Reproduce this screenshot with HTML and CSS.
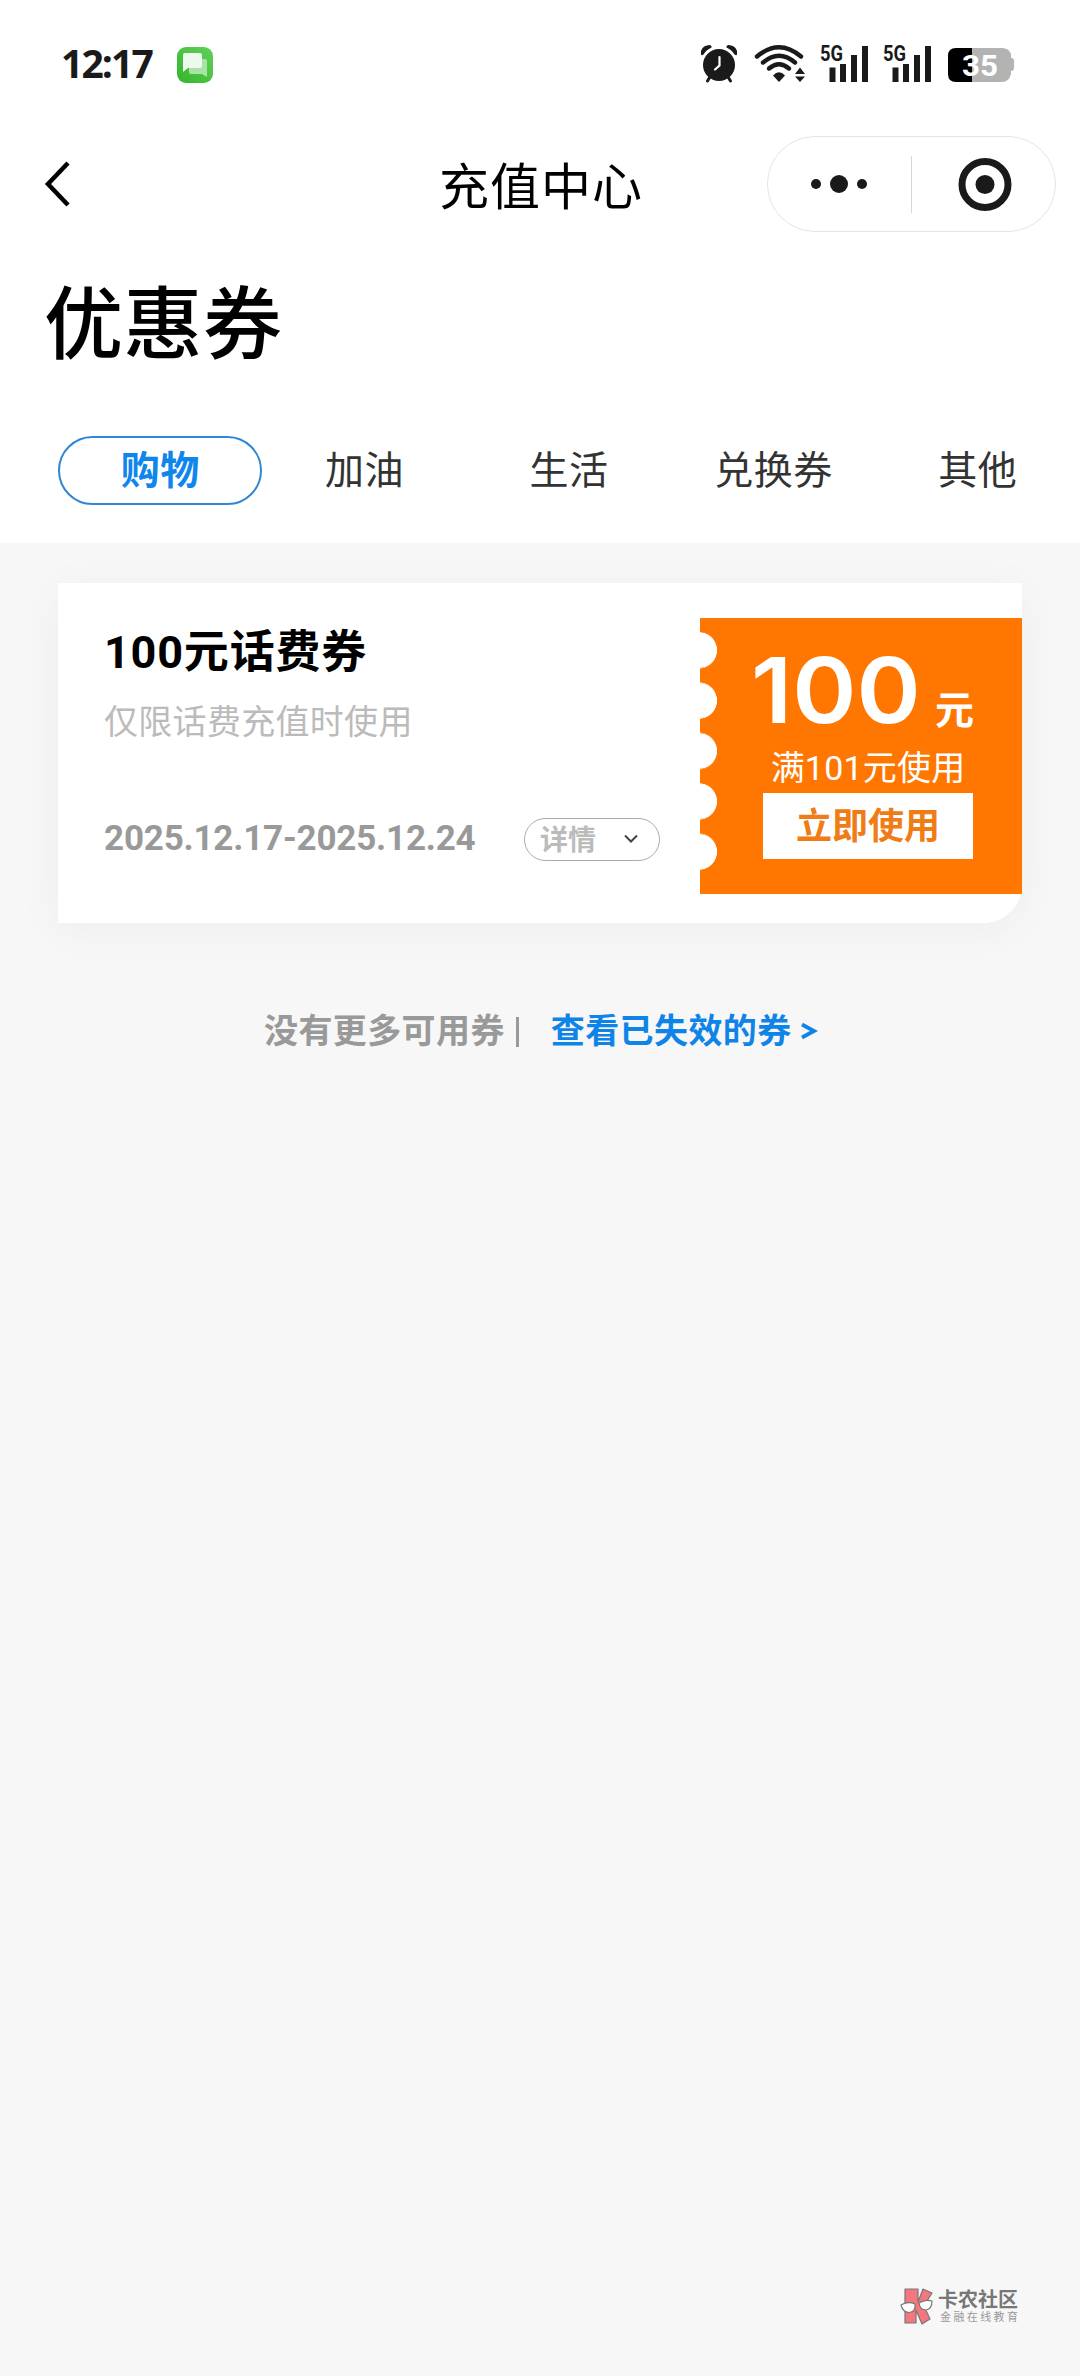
FILE: index.html
```html
<!DOCTYPE html>
<html lang="zh-CN">
<head>
<meta charset="utf-8">
<title>充值中心</title>
<link rel="stylesheet" href="styles.css">
</head>
<body>
<div class="page">
  <header class="top">
    <div class="status">
      <span class="clock">12:17</span>
      <svg class="msg" width="36" height="36" viewBox="0 0 36 36">
        <defs><linearGradient id="green" x1="1" y1="0" x2="0" y2="1"><stop offset="0" stop-color="#62d05a"/><stop offset="1" stop-color="#35b52c"/></linearGradient></defs>
        <rect width="36" height="36" rx="9" fill="url(#green)"/>
        <path d="M14 12h14q2 0 2 2v16l-5-3H14q-2 0-2-2V14z" fill="#a9e3a3"/>
        <path d="M8 6h15q2 0 2 2v11q0 2-2 2H11l-5 4V8q0-2 2-2z" fill="#edf9ec"/>
      </svg>
      <div class="status-icons">
        <svg width="38" height="40" viewBox="0 0 38 40">
          <g fill="none" stroke="#1a1a1a" stroke-linecap="round">
            <path d="M10.500 32L7.500 37M27.500 32L30.500 37" stroke-width="3"/>
          </g>
          <path d="M1 10.500Q0 2 9 1q3 0 2.500 2.500Q6 6 3.500 10.500 1.500 12 1 10.500zM37 10.500Q38 2 29 1q-3 0-2.500 2.500Q32 6 34.500 10.500q2 1.500 2.500 0z" fill="#1a1a1a"/>
          <circle cx="19" cy="21" r="16" fill="#1a1a1a"/>
          <path d="M19.500 13v8.500l-4.500 4" fill="none" stroke="#fff" stroke-width="2.200" stroke-linecap="round"/>
        </svg>
        <svg class="wifi" width="52" height="40" viewBox="0 0 52 40">
          <g fill="none" stroke="#1a1a1a" stroke-width="4.400" stroke-linecap="round">
            <path d="M3 12.500Q25 -6 47 12.500"/>
            <path d="M9 18.500Q25 5 41 18.500"/>
            <path d="M15 24.500Q25 16 35 24.500"/>
          </g>
          <path d="M25 38l-6-6.500q6-6.500 12 0z" fill="#1a1a1a"/>
          <path d="M46 23.500l5 6.500h-10zM46 38l5-5.500h-10z" fill="#1a1a1a"/>
        </svg>
        <svg class="signal" width="48" height="40" viewBox="0 0 48 40">
          <text x="0" y="17" class="net" textLength="23" lengthAdjust="spacingAndGlyphs">5G</text>
          <path d="M9.500 23.500h6V38h-6zM20 20h6v18h-6zM31 11h6v27h-6zM42 2h6v36h-6z" fill="#1a1a1a"/>
        </svg>
        <svg class="signal" width="48" height="40" viewBox="0 0 48 40">
          <text x="0" y="17" class="net" textLength="23" lengthAdjust="spacingAndGlyphs">5G</text>
          <path d="M9.500 23.500h6V38h-6zM20 20h6v18h-6zM31 11h6v27h-6zM42 2h6v36h-6z" fill="#1a1a1a"/>
        </svg>
        <svg class="battery" width="66" height="40" viewBox="0 0 66 40">
          <path d="M24 4h30q7 0 9 6v4q3 0 3 3v7q0 3-3 3v3q-2 8-9 8H24z" fill="#b3b3b3"/>
          <path d="M24 4H8Q0 4 0 12v18q0 8 8 8h16z" fill="#000"/>
          <text x="32" y="32" class="level" text-anchor="middle" textLength="36" lengthAdjust="spacingAndGlyphs">35</text>
        </svg>
      </div>
    </div>

    <nav class="nav">
      <svg class="back" width="30" height="50" viewBox="0 0 30 50">
        <path d="M24 4L4 25l20 21" fill="none" stroke="#000" stroke-width="4.500"/>
      </svg>
      <div class="nav-title">充值中心</div>
      <div class="capsule">
        <svg width="143" height="94" viewBox="0 0 143 94">
          <g fill="#1a1a1a"><circle cx="48" cy="47" r="5"/><circle cx="71" cy="47" r="9"/><circle cx="94" cy="47" r="5"/></g>
        </svg>
        <span class="split"></span>
        <svg width="143" height="94" viewBox="0 0 143 94">
          <circle cx="73" cy="47.500" r="23" fill="none" stroke="#1a1a1a" stroke-width="7"/><circle cx="73" cy="47.500" r="9.500" fill="#1a1a1a"/>
        </svg>
      </div>
    </nav>

    <h1 class="heading">优惠券</h1>

    <div class="tabs">
      <a class="tab active">购物</a>
      <a class="tab">加油</a>
      <a class="tab">生活</a>
      <a class="tab">兑换券</a>
      <a class="tab">其他</a>
    </div>
  </header>

  <main class="list">
    <article class="coupon">
      <div class="info">
        <h2 class="name">100元话费券</h2>
        <p class="limit">仅限话费充值时使用</p>
        <div class="meta">
          <span class="dates">2025.12.17-2025.12.24</span>
          <a class="detail"><span>详情</span>
            <svg width="16" height="12" viewBox="0 0 16 12"><path d="M2 2.500l6 6 6-6" fill="none" stroke="#444" stroke-width="2"/></svg>
          </a>
        </div>
      </div>
      <div class="ticket">
        <div class="amount"><span class="value">100</span><span class="unit">元</span></div>
        <div class="rule">满101元使用</div>
        <a class="use">立即使用</a>
      </div>
    </article>

    <p class="more"><span>没有更多可用券</span><i class="bar"></i><a class="expired">查看已失效的券</a><svg class="arrow" width="16" height="18" viewBox="0 0 16 18"><path d="M1 2.500L13 9 1 15.500" fill="none" stroke="#0f84e8" stroke-width="3.800"/></svg></p>
  </main>

  <footer class="mark">
    <svg width="36" height="38" viewBox="0 0 36 38">
      <g fill="#f4777d" stroke="#777" stroke-width="1.200" stroke-linejoin="round">
        <path d="M6 2h13v13l5-13 9 4-8 13 6 13-8 5-6-14v13H6z"/>
      </g>
      <g fill="#fff" stroke="#777" stroke-width="1.200">
        <path d="M2 18q7-4 14-1 1 8-6 8.500-6 0-8-7.500zM20 16q6-4 13-2 0 8-6 9-6 0-7-7z"/>
      </g>
    </svg>
    <div class="mark-text"><b>卡农社区</b><span>金融在线教育</span></div>
  </footer>
</div>
</body>
</html>
```
FILE: styles.css
```css
* { box-sizing: border-box; margin: 0; padding: 0; }
body {
  background: #f7f7f7;
  font-family: Roboto, "Noto Sans CJK SC", sans-serif;
  color: #000;
}
svg { display: block; flex: none; overflow: visible; }
.page { width: 1080px; height: 2376px; display: flex; flex-direction: column; overflow: hidden; }
.top { height: 543px; background: #fff; }

.status { display: flex; align-items: flex-start; height: 136px; padding: 44px 66px 0 61px; }
.clock {
  width: 116px;
  margin-top: -1px;
  font: 700 39px/40px "Open Sans", sans-serif;
  letter-spacing: -1.9px;
  color: #1a1a1a;
}
.msg { margin-top: 3px; }
.status-icons { display: flex; margin-left: auto; }
.wifi { margin-left: 16px; }
.signal { margin-left: 14px; }
.signal + .signal { margin-left: 15px; }
.battery { margin-left: 17px; }
.net { font: 700 22px Roboto, sans-serif; fill: #1a1a1a; }
.level { font: 700 30px Roboto, sans-serif; fill: #fff; }

.nav { display: flex; align-items: center; justify-content: space-between; height: 96px; padding: 0 24px 0 44px; }
.back { margin-right: 365px; }
.nav-title { padding-top: 7px; font-size: 50px; line-height: 60px; letter-spacing: 1px; }
.capsule {
  display: flex; align-items: center;
  width: 289px; height: 96px; margin-left: auto;
  border: 1px solid #e4e4e4; border-radius: 48px;
}
.split { flex: none; width: 1px; height: 57px; background: #d8d8d8; }

.heading { margin: 36px 0 0 44px; font-size: 79px; line-height: 116px; font-weight: 500; letter-spacing: 0.5px; }

.tabs { display: flex; margin: 52px 0 0 58px; }
.tab { width: 204.5px; height: 69px; font-size: 39px; line-height: 71px; letter-spacing: 0.5px; text-align: center; color: #333; }
.active { border: 2px solid #2f86d2; border-radius: 35px; line-height: 67px; font-weight: 700; color: #0f86ec; }

.list { flex: 1; padding: 40px 58px 0; }
.coupon {
  display: flex; height: 340px; padding-left: 46px;
  background: #fff; border-radius: 0 0 38px 0;
  box-shadow: 0 8px 44px rgba(130, 80, 80, 0.06);
}
.info { width: 596px; padding-top: 38px; }
.name { font-size: 45px; line-height: 64px; font-weight: 700; letter-spacing: 0.8px; }
.limit { margin-top: 12px; font-size: 34px; line-height: 50px; letter-spacing: 0.3px; color: #bbb; }
.meta { display: flex; align-items: center; margin-top: 70px; }
.dates { width: 420px; font-size: 35px; line-height: 44px; font-weight: 700; letter-spacing: -0.2px; color: #999; }
.detail {
  display: flex; align-items: center; justify-content: space-between;
  width: 136px; height: 43px; padding: 0 20px 0 15px;
  border: 1px solid #aaa; border-radius: 22px;
  font-size: 28px; line-height: 40px; font-weight: 700; color: #bbb;
}
.detail span { padding-top: 3px; }
.ticket {
  position: relative;
  display: flex; flex-direction: column; align-items: center;
  width: 322px; height: 276px; margin-top: 35px; padding-top: 31px; padding-left: 14px;
  background: #ff7700; color: #fff;
}
.ticket::before {
  content: ""; position: absolute; left: -1px; top: 7px; width: 19px; height: 252px;
  background: radial-gradient(circle at 0 50%, #fff 17.700px, transparent 18.300px) 0 0 / 19px 50.400px repeat-y;
}
.amount { display: flex; align-items: flex-end; height: 84px; width: 234px; }
.value { width: 184px; font: 600 91px/86px Inter, sans-serif; transform: scaleX(1.07); transform-origin: 0 50%; }
.unit { font-size: 39px; line-height: 43px; font-weight: 700; }
.rule { font-size: 34px; line-height: 50px; margin-top: 10px; letter-spacing: 0.2px; }
.use {
  width: 210px; height: 66px; background: #fff;
  font-size: 36px; line-height: 68px; font-weight: 700; text-align: center; color: #ef7c14;
}

.more { display: flex; align-items: center; margin: 83px 0 0 206px; font-size: 34px; line-height: 50px; font-weight: 700; letter-spacing: 0.4px; color: #999; }
.bar { width: 3px; height: 30px; margin: 2px 32px 0 11px; background: #999; }
.expired { color: #0f84e8; }
.arrow { margin-left: 9px; }

.mark { display: flex; margin: 0 0 51px 899px; height: 38px; }
.mark-text { display: flex; flex-direction: column; margin-left: 3px; padding-top: 1px; color: #777; }
.mark-text b { font-size: 20px; line-height: 24px; }
.mark-text span { font-size: 11px; line-height: 12px; letter-spacing: 2.400px; color: #999; margin-left: 2px; }
```
